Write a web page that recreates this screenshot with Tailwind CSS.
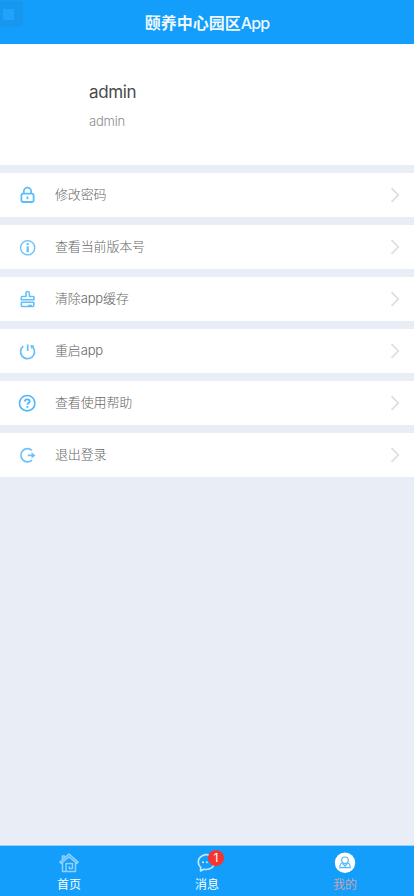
<!DOCTYPE html>
<html lang="zh-CN">
<head>
<meta charset="utf-8">
<meta name="viewport" content="width=device-width, initial-scale=1">
<title>颐养中心园区App</title>
<script src="https://cdn.jsdelivr.net/npm/@tailwindcss/browser@4"></script>
</head>
<body class="overflow-hidden font-['Inter','Noto_Sans_CJK_SC',sans-serif]">
<div class="relative flex h-[896px] w-[414px] flex-col bg-[#e9eef6]">
  <header class="flex h-11 shrink-0 items-center justify-center bg-[#129efa] pt-0.5 text-base font-bold text-white/95"><span>颐养中心园区<span class="font-medium tracking-[-0.8px]">App</span></span></header>
  <div class="absolute left-0 top-[1px] flex h-[26px] w-[23px] items-center rounded-br bg-[#1a96e8]/70 pl-[3px]"><span class="size-[11px] bg-[#1fa3fb]"></span></div>

  <section class="h-[121px] shrink-0 bg-white pl-[89px] pt-9">
    <h1 class="text-[17px] leading-6 tracking-[-0.35px] text-[#4a4a4a]">admin</h1>
    <p class="mt-[7px] text-[13px] leading-5 tracking-[-0.2px] font-light text-[#8c8c8c]">admin</p>
  </section>

  <main class="mt-2 flex flex-1 flex-col gap-2 text-[13px] font-light tracking-[-0.15px] text-[#666]">
    <div class="flex h-11 items-center bg-white pl-[18px] pr-[14px]">
      <svg class="size-[19px] text-[#5bbcfb]" viewBox="0 0 19 19" fill="none" stroke="currentColor" stroke-width="1.8"><rect x="3.4" y="7.6" width="12.2" height="8.4" rx="1.8"/><path d="M5.8 7.600V5.400a3.700 3.700 0 0 1 7.400 0v2.200M9.500 10.600v2.600"/></svg>
      <span class="ml-[18px] flex-1">修改密码</span>
      <svg class="h-4 w-[10px]" viewBox="0 0 10 16" fill="none" stroke="#dedede" stroke-width="1.7"><path d="M1.5 1.2 8.3 8l-6.8 6.8"/></svg>
    </div>
    <div class="flex h-11 items-center bg-white pl-[18px] pr-[14px]">
      <svg class="size-[19px] text-[#67c1fb]" viewBox="0 0 19 19" fill="none" stroke="currentColor"><circle cx="9.7" cy="9.8" r="7.1" stroke-width="1.3"/><path d="M9.7 8.200v6M9.700 5.200v1.700" stroke-width="2.3"/></svg>
      <span class="ml-[18px] flex-1">查看当前版本号</span>
      <svg class="h-4 w-[10px]" viewBox="0 0 10 16" fill="none" stroke="#dedede" stroke-width="1.7"><path d="M1.5 1.2 8.3 8l-6.8 6.8"/></svg>
    </div>
    <div class="flex h-11 items-center bg-white pl-[18px] pr-[14px]">
      <svg class="size-[19px] text-[#62bffb]" viewBox="0 0 19 19" fill="none" stroke="currentColor" stroke-width="1.6" stroke-linejoin="round"><path d="M8 6.500V3.200a1.700 1.700 0 0 1 3.400 0v3.300H15q1 0 1 1v2.300H3.300V7.500q0-1 1-1zM3.500 12.300h12.300v3.200q0 1-1 1H4.300q-1 0-1-1z"/><path d="M10 15.500h4" stroke-width="1.5"/></svg>
      <span class="ml-[18px] flex-1">清除app缓存</span>
      <svg class="h-4 w-[10px]" viewBox="0 0 10 16" fill="none" stroke="#dedede" stroke-width="1.7"><path d="M1.5 1.2 8.3 8l-6.8 6.8"/></svg>
    </div>
    <div class="flex h-11 items-center bg-white pl-[18px] pr-[14px]">
      <svg class="size-[19px] text-[#62bffb]" viewBox="0 0 19 19" fill="none" stroke="currentColor" stroke-width="1.7"><path d="M5.300 4.200a7 7 0 1 0 9.600 1M9.700 2.600v6.400"/><path d="m12.300 3 4.200.4-3 3.700z" fill="currentColor" stroke="none"/></svg>
      <span class="ml-[18px] flex-1">重启app</span>
      <svg class="h-4 w-[10px]" viewBox="0 0 10 16" fill="none" stroke="#dedede" stroke-width="1.7"><path d="M1.5 1.2 8.3 8l-6.8 6.8"/></svg>
    </div>
    <div class="flex h-11 items-center bg-white pl-[18px] pr-[14px]">
      <svg class="size-[19px] text-[#4fb7fb]" viewBox="0 0 19 19" fill="none" stroke="currentColor"><circle cx="9.2" cy="9.2" r="7.700" stroke-width="1.600"/><path d="M6.900 7.600c0-3 4.800-2.800 4.800-.2 0 1.500-2.300 1.600-2.300 3.400M9.400 12v1.800" stroke-width="1.900"/></svg>
      <span class="ml-[18px] flex-1">查看使用帮助</span>
      <svg class="h-4 w-[10px]" viewBox="0 0 10 16" fill="none" stroke="#dedede" stroke-width="1.7"><path d="M1.5 1.2 8.3 8l-6.8 6.8"/></svg>
    </div>
    <div class="flex h-11 items-center bg-white pl-[18px] pr-[14px]">
      <svg class="size-[19px] text-[#6cc3fb]" viewBox="0 0 19 19" fill="none" stroke="currentColor" stroke-width="1.7"><path d="M14 4.500a6.600 6.600 0 1 0 0 9.600M9.800 9.400h5"/><path d="m13.500 6.200 4 3.200-4 3.200z" fill="currentColor" stroke="none"/></svg>
      <span class="ml-[18px] flex-1">退出登录</span>
      <svg class="h-4 w-[10px]" viewBox="0 0 10 16" fill="none" stroke="#dedede" stroke-width="1.7"><path d="M1.5 1.2 8.3 8l-6.8 6.8"/></svg>
    </div>
  </main>

  <nav class="grid h-[51px] shrink-0 grid-cols-3 border-t border-[#9ccff4] bg-[#129efa] text-xs leading-4 text-white">
    <a class="flex flex-col items-center pt-[6px]">
      <svg class="size-[22px] text-[#8fd1fc]" viewBox="0 0 22 22" fill="none" stroke="currentColor" stroke-width="1.5" stroke-linejoin="round"><path d="M4.5 10.2 3 11.4 1.9 10 11 2.1l9.1 7.900-1.100 1.400-1.500-1.200v9.200H4.500zM4.500 10.200 11 4.800l6.500 5.400M4.400 7.500V4h2v1.800M8 19v-7.500h6.500v5h-3.200v-2.200"/></svg>
      <span class="mt-[3px]">首页</span>
    </a>
    <a class="flex flex-col items-center pt-[6px]">
      <span class="relative">
        <svg class="size-[22px] text-[#c5e7fd]" viewBox="0 0 22 22" fill="none" stroke="currentColor" stroke-width="1.7" stroke-linecap="round" stroke-linejoin="round"><path d="M14.5 3.700C9 1 2.300 4.500 2.300 10.200c0 2.200 1 4 2.400 5.200L4.600 19l3.200-1.700c4 .8 8.600-.8 10.200-4.300"/><path d="M7 10.200h.1M10.800 10.200h.1M14.600 10.200h.1" stroke-width="2"/></svg>
        <b class="absolute left-[12px] top-[-2px] flex size-4 items-center justify-center rounded-full bg-[#f43530] text-xs font-normal leading-4">1</b>
      </span>
      <span class="mt-[3px]">消息</span>
    </a>
    <a class="flex flex-col items-center pt-[6px] text-[#c9a5aa]">
      <svg class="size-[22px]" viewBox="0 0 22 22" fill="none" stroke="#55b8fa" stroke-width="1.2"><circle cx="11" cy="10.700" r="10.200" fill="#fff" stroke="none"/><circle cx="11" cy="8.300" r="3.300"/><path d="M8.500 10.800c-2.200.8-2.800 2.300-2.700 4.900h10.400c.1-2.600-.5-4.100-2.700-4.900M8.600 11.500l2.400 2.500 2.400-2.500M11 13.500v2.200"/></svg>
      <span class="mt-[3px]">我的</span>
    </a>
  </nav>
</div>
</body>
</html>
